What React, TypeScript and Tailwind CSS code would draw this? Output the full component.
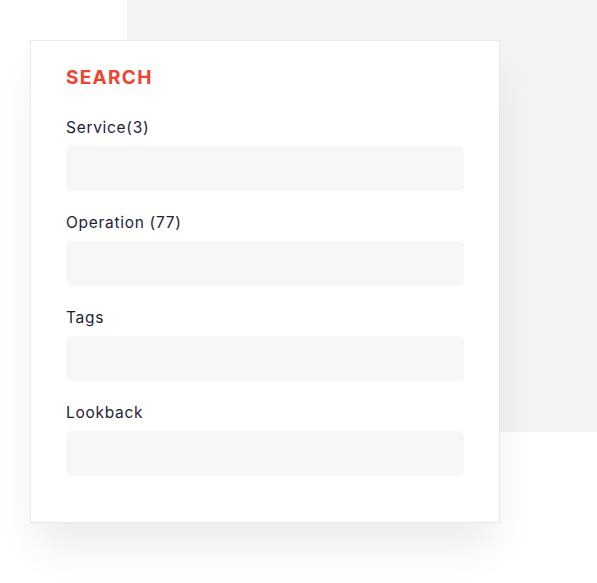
const fields = ['Service(3)', 'Operation (77)', 'Tags', 'Lookback'];

export default function App() {
  return (
    <div className="relative w-[597px] h-[583px] bg-white overflow-hidden" style={{ fontFamily: 'Inter, "Liberation Sans", sans-serif' }}>
      <div className="absolute left-[127px] top-0 w-[470px] h-[432px] bg-[#f3f3f3]" />
      <div className="absolute left-[30px] top-[40px] w-[470px] h-[483px] bg-white border border-[#e9e9e9] shadow-[0_28px_40px_-6px_rgba(0,0,0,0.08)] pt-[25px] px-[35px]">
        <h1 className="text-[19px] leading-[24px] font-bold text-[#ee4430] tracking-[1.3px]">SEARCH</h1>
        <div className="mt-[28px] flex flex-col gap-[22px]">
          {fields.map((f) => (
            <div key={f} className="flex flex-col gap-[8px]">
              <label className="text-[15.5px] leading-[20px] text-[#1d2236] tracking-[0.7px]">{f}</label>
              <div className="h-[45px] w-[398px] rounded-[5px] bg-[#f7f7f7]" />
            </div>
          ))}
        </div>
      </div>
    </div>
  );
}
